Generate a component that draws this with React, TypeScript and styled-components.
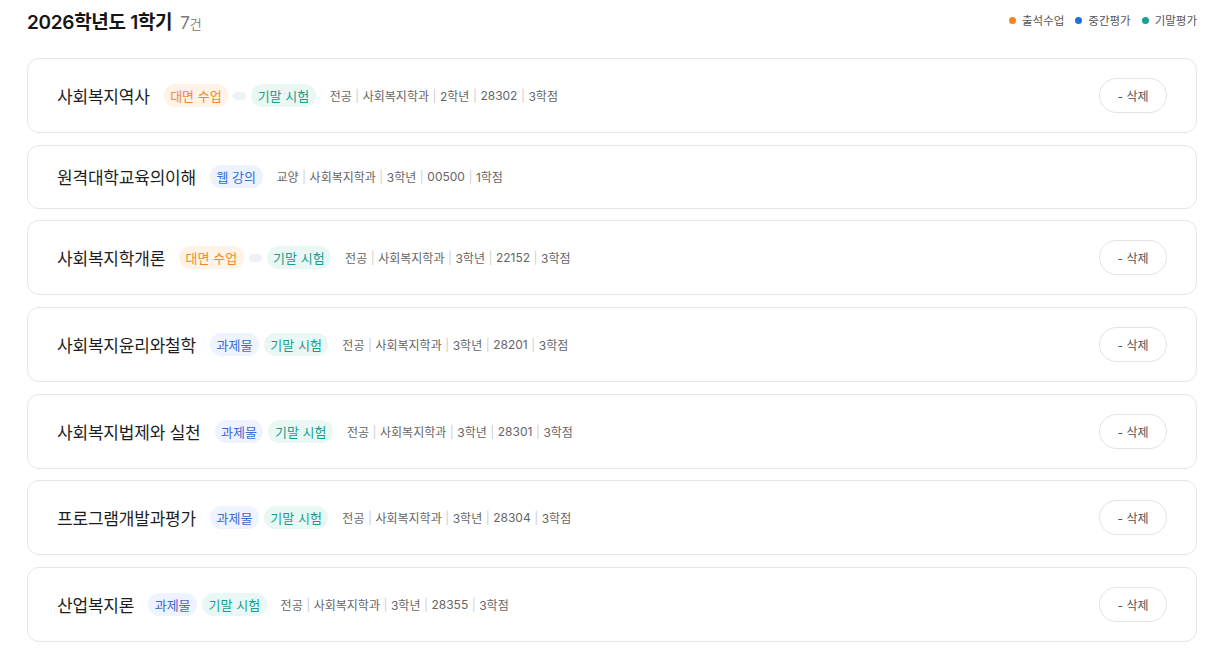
import React from 'react'
import styled, { createGlobalStyle } from 'styled-components'

const GlobalStyle = createGlobalStyle`
  body {
    margin: 0;
    background: #ffffff;
    font-family: Inter, "Noto Sans CJK KR", sans-serif;
    color: #222;
  }
`

type TagKind = 'offline' | 'final' | 'web' | 'task' | 'blank'

interface Course {
  name: string
  tags: TagKind[]
  meta: string[]
  removable: boolean
}

const courses: Course[] = [
  { name: '사회복지역사', tags: ['offline', 'blank', 'final'], meta: ['전공', '사회복지학과', '2학년', '28302', '3학점'], removable: true },
  { name: '원격대학교육의이해', tags: ['web'], meta: ['교양', '사회복지학과', '3학년', '00500', '1학점'], removable: false },
  { name: '사회복지학개론', tags: ['offline', 'blank', 'final'], meta: ['전공', '사회복지학과', '3학년', '22152', '3학점'], removable: true },
  { name: '사회복지윤리와철학', tags: ['task', 'final'], meta: ['전공', '사회복지학과', '3학년', '28201', '3학점'], removable: true },
  { name: '사회복지법제와 실천', tags: ['task', 'final'], meta: ['전공', '사회복지학과', '3학년', '28301', '3학점'], removable: true },
  { name: '프로그램개발과평가', tags: ['task', 'final'], meta: ['전공', '사회복지학과', '3학년', '28304', '3학점'], removable: true },
  { name: '산업복지론', tags: ['task', 'final'], meta: ['전공', '사회복지학과', '3학년', '28355', '3학점'], removable: true },
]

const tagText: Record<TagKind, string> = {
  offline: '대면 수업',
  final: '기말 시험',
  web: '웹 강의',
  task: '과제물',
  blank: '',
}

const tagColors: Record<TagKind, { bg: string; fg: string }> = {
  offline: { bg: '#fff3e8', fg: '#ef8a2a' },
  final: { bg: '#eaf8f5', fg: '#1b9d8d' },
  web: { bg: '#ecf3ff', fg: '#2f6fd6' },
  task: { bg: '#eef3ff', fg: '#3d6bd1' },
  blank: { bg: '#edf2f8', fg: 'transparent' },
}

const Page = styled.div`
  padding: 7px 21px 16px 27px;
`

const Header = styled.div`
  display: flex;
  align-items: center;
  justify-content: space-between;
  height: 26px;
  margin-bottom: 25px;
`

const Title = styled.h2`
  margin: 0;
  font-size: 19px;
  font-weight: 600;
  color: #151515;
  letter-spacing: -0.3px;
`

const Count = styled.span`
  margin-left: 8px;
  font-size: 17px;
  font-weight: 400;
  color: #7a7a7a;
`

const CountUnit = styled.span`
  font-size: 13px;
  color: #8a8a8a;
`

const Legend = styled.div`
  display: flex;
  align-items: center;
  gap: 11px;
`

const LegendItem = styled.span<{ $dot: string }>`
  display: flex;
  align-items: center;
  gap: 6px;
  font-size: 11.5px;
  color: #555;

  &::before {
    content: '';
    width: 7px;
    height: 7px;
    border-radius: 50%;
    background: ${({ $dot }) => $dot};
  }
`

const List = styled.div`
  display: flex;
  flex-direction: column;
  gap: 11.67px;
`

const Card = styled.div<{ $tall: boolean }>`
  display: flex;
  align-items: center;
  justify-content: space-between;
  box-sizing: border-box;
  height: ${({ $tall }) => ($tall ? '75px' : '64px')};
  padding: 0 29px;
  border: 1px solid #e4e6ea;
  border-radius: 12px;
  background: #fff;
`

const Info = styled.div`
  display: flex;
  align-items: center;
`

const Name = styled.span`
  font-size: 17px;
  font-weight: 400;
  color: #1e1e1e;
  margin-right: 14px;
  letter-spacing: -0.2px;
`

const Tags = styled.div`
  display: flex;
  align-items: center;
  gap: 5px;
  margin-right: 14px;
`

const Tag = styled.span<{ $kind: TagKind }>`
  display: inline-flex;
  align-items: center;
  height: ${({ $kind }) => ($kind === 'blank' ? '8px' : '23px')};
  min-width: ${({ $kind }) => ($kind === 'blank' ? '13px' : 'auto')};
  padding: 0 ${({ $kind }) => ($kind === 'blank' ? '0' : '6.5px')};
  border-radius: 12px;
  font-size: 13px;
  background: ${({ $kind }) => tagColors[$kind].bg};
  color: ${({ $kind }) => tagColors[$kind].fg};
`

const Meta = styled.span`
  display: flex;
  align-items: center;
  font-size: 12px;
  color: #666;
`

const Sep = styled.span`
  color: #cfcfcf;
  margin: 0 3.5px;
`

const RemoveButton = styled.button`
  width: 68px;
  height: 35px;
  border: 1px solid #e3e3e3;
  border-radius: 18px;
  background: #fff;
  font-family: inherit;
  font-size: 12px;
  color: #555;
  cursor: pointer;
`

export default function App() {
  return (
    <Page>
      <GlobalStyle />
      <Header>
        <Title>
          2026학년도 1학기
          <Count>
            7<CountUnit>건</CountUnit>
          </Count>
        </Title>
        <Legend>
          <LegendItem $dot="#f5831f">출석수업</LegendItem>
          <LegendItem $dot="#1f6fe0">중간평가</LegendItem>
          <LegendItem $dot="#17a096">기말평가</LegendItem>
        </Legend>
      </Header>
      <List>
        {courses.map((c) => (
          <Card key={c.name} $tall={c.removable}>
            <Info>
              <Name>{c.name}</Name>
              <Tags>
                {c.tags.map((t, i) => (
                  <Tag key={i} $kind={t}>
                    {tagText[t]}
                  </Tag>
                ))}
              </Tags>
              <Meta>
                {c.meta.map((m, i) => (
                  <React.Fragment key={i}>
                    {i > 0 && <Sep>|</Sep>}
                    {m}
                  </React.Fragment>
                ))}
              </Meta>
            </Info>
            {c.removable && <RemoveButton type="button">- 삭제</RemoveButton>}
          </Card>
        ))}
      </List>
    </Page>
  )
}
